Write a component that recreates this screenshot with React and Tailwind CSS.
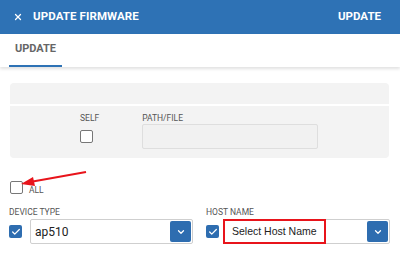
import { X, ChevronDown, Check } from 'lucide-react';

function CheckedBox() {
  return (
    <div className="w-[13px] h-[13px] rounded-[2px] bg-[#2e6db0] flex items-center justify-center shrink-0">
      <Check className="w-[10px] h-[10px] text-white" strokeWidth={3} />
    </div>
  );
}

function Select({ value, highlight }) {
  return (
    <div className="flex-1 h-[25px] border border-[#cfcfcf] rounded-[2px] flex items-center relative">
      {highlight ? (
        <div className="h-[25px] w-[103px] border-2 border-[#e8141b] flex items-center pl-[7px] text-[10.5px] text-[#222] -ml-px whitespace-nowrap font-['Liberation_Sans',sans-serif]">
          {value}
        </div>
      ) : (
        <span className="pl-[4px] text-[12px] text-[#222]">{value}</span>
      )}
      <div className="ml-auto mr-px w-[21px] h-[21px] bg-[#2e6db0] rounded-[2px] flex items-center justify-center">
        <ChevronDown className="w-[10px] h-[10px] text-white" strokeWidth={3} />
      </div>
    </div>
  );
}

export default function App() {
  return (
    <div className="w-[400px] h-[268px] overflow-hidden bg-white relative font-['Roboto',sans-serif]">
      {/* Header */}
      <div className="h-[34px] bg-[#2e72b5] flex items-center pl-[13px] pr-[19px] text-white">
        <X className="w-[10px] h-[10px]" strokeWidth={3} />
        <span className="ml-[10px] text-[11.5px] font-bold tracking-[0.1px]">UPDATE FIRMWARE</span>
        <span className="ml-auto text-[11.5px] font-bold">UPDATE</span>
      </div>

      {/* Tabs */}
      <div className="h-[33px] flex items-end pl-[9px] shadow-[0_2px_3px_rgba(0,0,0,0.12)]">
        <div className="w-[53px] h-[33px] flex items-center justify-center border-b-2 border-[#2e72b5] text-[11px] font-bold text-[#666]">
          UPDATE
        </div>
      </div>

      {/* Body */}
      <div className="pl-[10px] pr-[11px] pt-[16px]">
        <div className="h-[21px] bg-[#f3f3f3] rounded-t-[4px]" />
        <div className="mt-[2px] h-[52px] bg-[#f3f3f3] rounded-b-[4px] flex pt-[7px]">
          <div className="ml-[70px] flex flex-col">
            <span className="text-[8.5px] text-[#555] leading-[10px]">SELF</span>
            <div className="mt-[7px] w-[13px] h-[13px] border-[1.5px] border-[#777] rounded-[2px] bg-white" />
          </div>
          <div className="ml-[43px] flex flex-col">
            <span className="text-[8.5px] text-[#555] leading-[10px]">PATH/FILE</span>
            <div className="mt-px w-[176px] h-[25px] bg-[#f1f1f1] border border-[#dedede] rounded-[2px]" />
          </div>
        </div>

        <div className="mt-[22px] flex items-center">
          <div className="w-[13px] h-[13px] border-[1.5px] border-[#777] rounded-[2px]" />
          <span className="ml-[6px] mt-[5px] text-[8.5px] text-[#555] leading-[10px]">ALL</span>
        </div>
      </div>

      <div className="flex pl-[9px] pr-[10px] mt-[12px]">
        <div className="w-[184px] flex flex-col">
          <span className="text-[8.5px] text-[#555] leading-[10px]">DEVICE TYPE</span>
          <div className="mt-[2px] flex items-center gap-[8px]">
            <CheckedBox />
            <Select value="ap510" />
          </div>
        </div>
        <div className="ml-[13px] flex-1 flex flex-col">
          <span className="text-[8.5px] text-[#555] leading-[10px]">HOST NAME</span>
          <div className="mt-[2px] flex items-center gap-[4px]">
            <CheckedBox />
            <Select value="Select Host Name" highlight />
          </div>
        </div>
      </div>

      {/* Annotation arrow */}
      <svg className="absolute left-0 top-0 pointer-events-none" width="400" height="268">
        <line x1="86" y1="172" x2="30" y2="182" stroke="#e8141b" strokeWidth="2" />
        <polygon points="21,184 33,177 35,186" fill="#e8141b" />
      </svg>
    </div>
  );
}
